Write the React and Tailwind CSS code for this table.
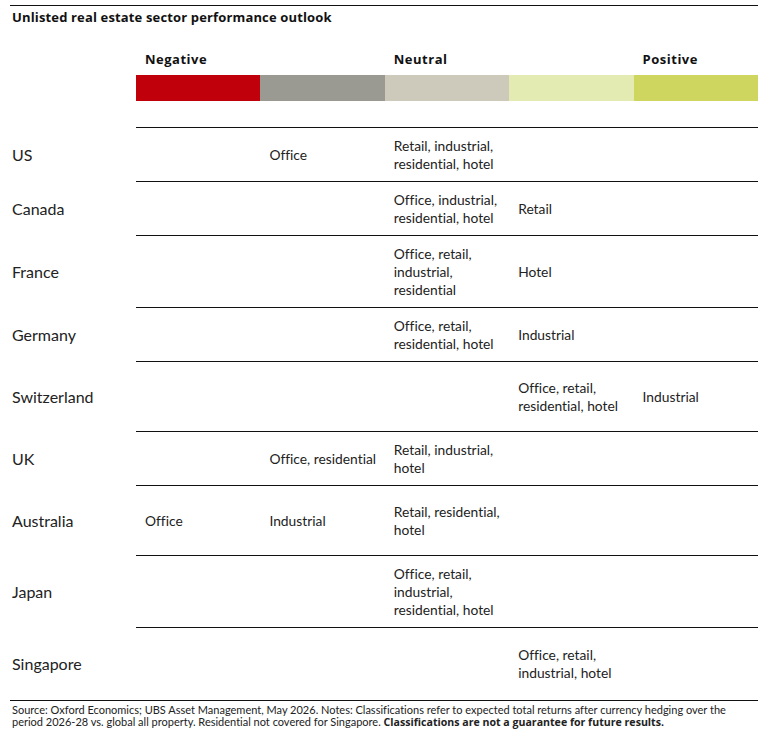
import React from "react";

const rows = [
  { country: "US", h: "h-[54px]", cells: ["", "Office", "Retail, industrial,\nresidential, hotel", "", ""] },
  { country: "Canada", h: "h-[54px]", cells: ["", "", "Office, industrial,\nresidential, hotel", "Retail", ""] },
  { country: "France", h: "h-[72px]", cells: ["", "", "Office, retail,\nindustrial,\nresidential", "Hotel", ""] },
  { country: "Germany", h: "h-[54px]", cells: ["", "", "Office, retail,\nresidential, hotel", "Industrial", ""] },
  { country: "Switzerland", h: "h-[70px]", cells: ["", "", "", "Office, retail,\nresidential, hotel", "Industrial"] },
  { country: "UK", h: "h-[54px]", cells: ["", "Office, residential", "Retail, industrial,\nhotel", "", ""] },
  { country: "Australia", h: "h-[70px]", cells: ["Office", "Industrial", "Retail, residential,\nhotel", "", ""] },
  { country: "Japan", h: "h-[72px]", cells: ["", "", "Office, retail,\nindustrial,\nresidential, hotel", "", ""] },
  { country: "Singapore", h: "h-[72px]", cells: ["", "", "", "Office, retail,\nindustrial, hotel", ""] },
];

const bar = ["bg-[#c0000b]", "bg-[#9b9a92]", "bg-[#cdcabc]", "bg-[#e4ebb2]", "bg-[#ced65f]"];

export default function App() {
  return (
    <div className="w-[777px] h-[732px] bg-white text-[#111] font-['Lato','Liberation_Sans',sans-serif] [font-variant-ligatures:none] pt-[5px] pl-[10px]">
      <div className="w-[748px]">
        {/* Title */}
        <div className="border-t border-[#111] pt-[3px] pl-[2px] text-[13px] font-bold leading-[16px] tracking-[0.15px] font-['Open_Sans',sans-serif]">
          Unlisted real estate sector performance outlook
        </div>

        {/* Legend */}
        <div className="grid grid-cols-[126px_repeat(5,1fr)] mt-[26px] font-['Open_Sans',sans-serif] text-[13px] font-bold leading-[16px] tracking-[0.5px]">
          <div />
          <div className="pl-[9px]">Negative</div>
          <div />
          <div className="pl-[9px]">Neutral</div>
          <div />
          <div className="pl-[9px]">Positive</div>
        </div>
        <div className="grid grid-cols-[126px_repeat(5,1fr)] mt-[8px]">
          <div />
          {bar.map((c) => (
            <div key={c} className={`${c} h-[26px]`} />
          ))}
        </div>

        {/* Table */}
        <div className="ml-[126px] mt-[26px] border-t border-[#111]" />
        {rows.map((r, i) => (
          <div key={r.country} className={`grid grid-cols-[126px_repeat(5,1fr)] ${r.h} relative`}>
            <div className="flex items-center pl-[2px] text-[16px] text-[#222]">{r.country}</div>
            {r.cells.map((c, j) => (
              <div key={j} className="flex items-center pl-[9px] text-[13.8px] leading-[18px] text-[#222] whitespace-pre-line">
                {c}
              </div>
            ))}
            {i < rows.length - 1 && (
              <div className="absolute left-[126px] right-0 bottom-0 border-t border-[#111]" />
            )}
          </div>
        ))}

        {/* Footer */}
        <div className="border-t border-[#111] pt-[3px] pl-[2px] text-[11px] leading-[12px] text-[#222]">
          Source: Oxford Economics; UBS Asset Management, May 2026. Notes: Classifications refer to expected total returns after currency hedging over the
          <br />
          period 2026-28 vs. global all property. Residential not covered for Singapore.{" "}
          <span className="font-bold font-['Open_Sans',sans-serif] text-[10.6px] leading-[12px]">
            Classifications are not a guarantee for future results.
          </span>
        </div>
      </div>
    </div>
  );
}
